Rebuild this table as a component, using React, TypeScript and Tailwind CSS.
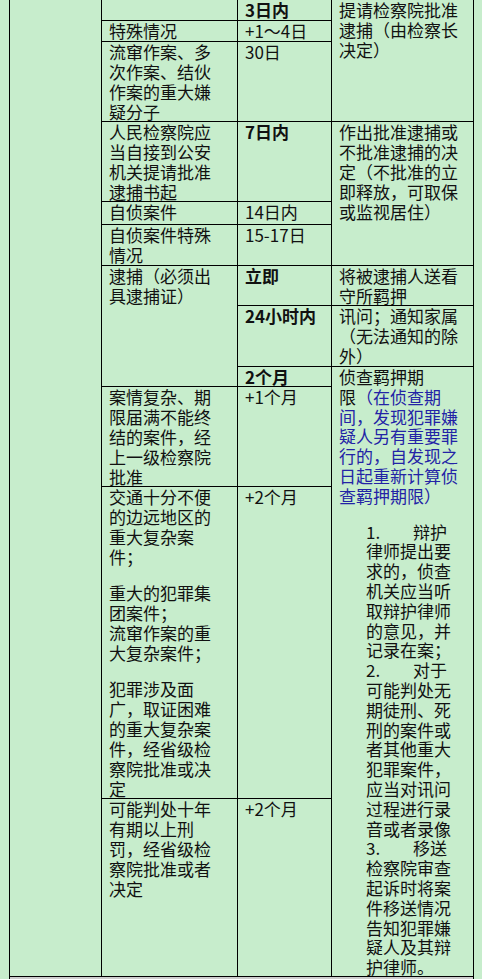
import type { ReactNode } from "react";

// one line per entry, "" = short blank paragraph
function Lines({ lines }: { lines: string[] }) {
  return (
    <>
      {lines.map((line, i) =>
        line === "" ? (
          <div key={i} className="h-4" />
        ) : (
          <div key={i} className="whitespace-nowrap">
            {line}
          </div>
        )
      )}
    </>
  );
}

function Cell({ className, children }: { className: string; children?: ReactNode }) {
  return <div className={`bg-[#c7edcc] pl-[7px] pr-1 ${className}`}>{children}</div>;
}

const listLines = [
  ["1.", "辩护"],
  "律师提出要",
  "求的，侦查",
  "机关应当听",
  "取辩护律师",
  "的意见，并",
  "记录在案；",
  ["2.", "对于"],
  "可能判处无",
  "期徒刑、死",
  "刑的案件或",
  "者其他重大",
  "犯罪案件，",
  "应当对讯问",
  "过程进行录",
  "音或者录像",
  ["3.", "移送"],
  "检察院审查",
  "起诉时将案",
  "件移送情况",
  "告知犯罪嫌",
  "疑人及其辩",
  "护律师。",
];

export default function App() {
  return (
    <div className="h-[979px] w-[482px] overflow-hidden bg-[#c7edcc] font-['Noto_Sans_CJK_SC',sans-serif] text-[17px] leading-[20px] text-[#111]">
      <div className="ml-[9px] grid w-[465px] grid-cols-[91px_135px_93px_141px] grid-rows-[20px_20px_79px_79px_22px_40px_39px_60px_19px_99px_311px_177px_20px] gap-px bg-black px-px">
        {/* left column, content is above the visible part */}
        <Cell className="col-start-1 row-start-1 row-span-12" />

        {/* rows 1-3 */}
        <Cell className="col-start-2 row-start-1" />
        <Cell className="col-start-3 row-start-1 font-bold">3日内</Cell>
        <Cell className="col-start-4 row-start-1 row-span-3">
          <Lines lines={["提请检察院批准", "逮捕（由检察长", "决定）"]} />
        </Cell>
        <Cell className="col-start-2 row-start-2">特殊情况</Cell>
        <Cell className="col-start-3 row-start-2">+1～4日</Cell>
        <Cell className="col-start-2 row-start-3">
          <Lines lines={["流窜作案、多", "次作案、结伙", "作案的重大嫌", "疑分子"]} />
        </Cell>
        <Cell className="col-start-3 row-start-3">30日</Cell>

        {/* rows 4-6 */}
        <Cell className="col-start-2 row-start-4">
          <Lines lines={["人民检察院应", "当自接到公安", "机关提请批准", "逮捕书起"]} />
        </Cell>
        <Cell className="col-start-3 row-start-4 font-bold">7日内</Cell>
        <Cell className="col-start-4 row-start-4 row-span-3">
          <Lines
            lines={["作出批准逮捕或", "不批准逮捕的决", "定（不批准的立", "即释放，可取保", "或监视居住）"]}
          />
        </Cell>
        <Cell className="col-start-2 row-start-5">自侦案件</Cell>
        <Cell className="col-start-3 row-start-5">14日内</Cell>
        <Cell className="col-start-2 row-start-6">
          <Lines lines={["自侦案件特殊", "情况"]} />
        </Cell>
        <Cell className="col-start-3 row-start-6">15-17日</Cell>

        {/* arrest */}
        <Cell className="col-start-2 row-start-7 row-span-3">
          <Lines lines={["逮捕（必须出", "具逮捕证）"]} />
        </Cell>
        <Cell className="col-start-3 row-start-7 font-bold">立即</Cell>
        <Cell className="col-start-4 row-start-7">
          <Lines lines={["将被逮捕人送看", "守所羁押"]} />
        </Cell>
        <Cell className="col-start-3 row-start-8 font-bold">24小时内</Cell>
        <Cell className="col-start-4 row-start-8">
          <Lines lines={["讯问；通知家属", "（无法通知的除", "外）"]} />
        </Cell>
        <Cell className="col-start-3 row-start-9 font-bold">2个月</Cell>

        <Cell className="col-start-4 row-start-9 row-span-4 leading-[19.8px]">
          <div>侦查羁押期</div>
          <div className="whitespace-nowrap">
            限<span className="text-[#2323a6]">（在侦查期</span>
          </div>
          <div className="text-[#2323a6]">
            <Lines
              lines={["间，发现犯罪嫌", "疑人另有重要罪", "行的，自发现之", "日起重新计算侦", "查羁押期限）"]}
            />
          </div>
          <div className="h-4" />
          <div className="ml-[27px] w-[90px]">
            {listLines.map((line, i) =>
              Array.isArray(line) ? (
                <div key={i} className="flex whitespace-nowrap">
                  <span className="w-[47px]">{line[0]}</span>
                  <span>{line[1]}</span>
                </div>
              ) : (
                <div key={i} className="whitespace-nowrap">
                  {line}
                </div>
              )
            )}
          </div>
        </Cell>

        {/* extensions */}
        <Cell className="col-start-2 row-start-10">
          <Lines lines={["案情复杂、期", "限届满不能终", "结的案件，经", "上一级检察院", "批准"]} />
        </Cell>
        <Cell className="col-start-3 row-start-10">+1个月</Cell>
        <Cell className="col-start-2 row-start-11">
          <Lines
            lines={[
              "交通十分不便",
              "的边远地区的",
              "重大复杂案",
              "件；",
              "",
              "重大的犯罪集",
              "团案件；",
              "流窜作案的重",
              "大复杂案件；",
              "",
              "犯罪涉及面",
              "广，取证困难",
              "的重大复杂案",
              "件，经省级检",
              "察院批准或决",
              "定",
            ]}
          />
        </Cell>
        <Cell className="col-start-3 row-start-11">+2个月</Cell>
        <Cell className="col-start-2 row-start-12">
          <Lines lines={["可能判处十年", "有期以上刑", "罚，经省级检", "察院批准或者", "决定"]} />
        </Cell>
        <Cell className="col-start-3 row-start-12">+2个月</Cell>

        <div className="col-span-4 col-start-1 row-start-13 bg-[#cdcdcd]" />
      </div>
    </div>
  );
}
